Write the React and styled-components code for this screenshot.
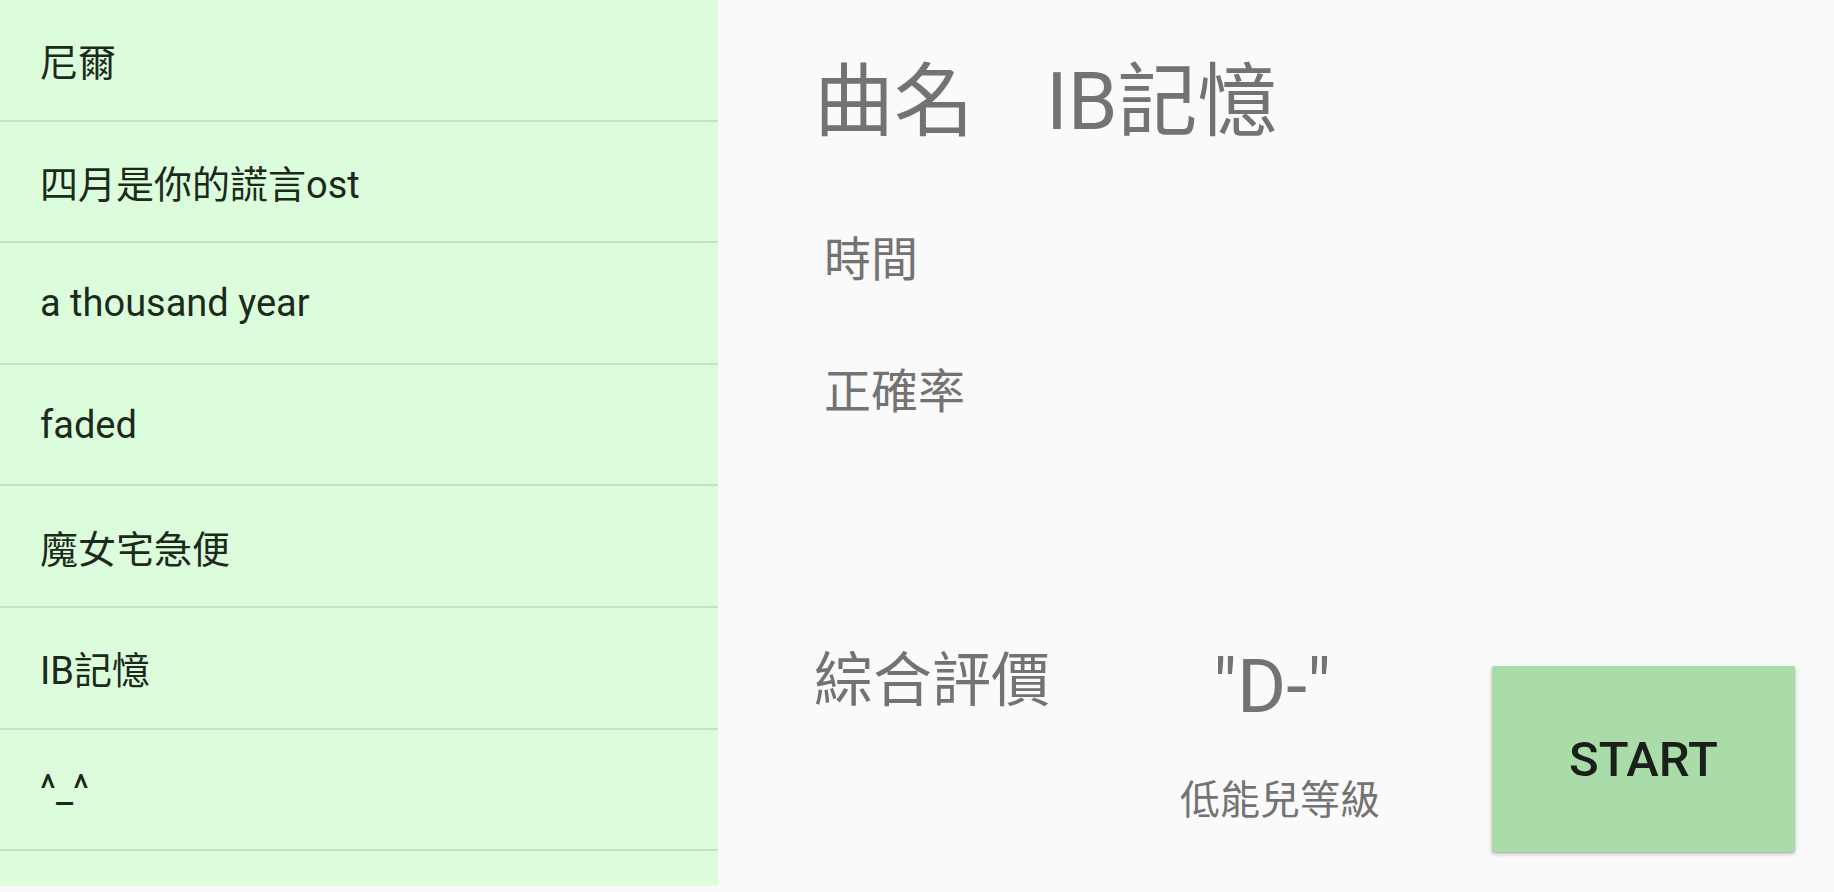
import React from 'react'
import styled, { createGlobalStyle } from 'styled-components'

const songs = [
  '尼爾',
  '四月是你的謊言ost',
  'a thousand year',
  'faded',
  '魔女宅急便',
  'IB記憶',
  '^_^',
  '',
]

const GlobalStyle = createGlobalStyle`
  html, body {
    margin: 0;
    padding: 0;
    background: #fafafa;
  }
  body {
    font-family: Roboto, "Noto Sans CJK TC", sans-serif;
  }
`

const Screen = styled.div`
  display: flex;
  width: 1834px;
  height: 892px;
  overflow: hidden;
  background: #fafafa;
`

const SongList = styled.ul`
  list-style: none;
  margin: 0;
  padding: 0;
  width: 718px;
  height: 886px;
  flex: none;
  overflow: hidden;
  background: #dcfddc;
`

const SongRow = styled.li`
  box-sizing: border-box;
  display: flex;
  align-items: center;
  height: 121.6px;
  padding-left: 40px;
  border-bottom: 2px solid #c5e2c5;
  font-size: 38px;
  color: #1c2a1c;
  white-space: pre;
`

const Detail = styled.section`
  flex: 1;
  display: flex;
  flex-direction: column;
  padding: 0 39px 40px 96px;
  color: #737373;
`

const Title = styled.h1`
  display: flex;
  margin: 62px 0 0;
  font-size: 80px;
  font-weight: 400;
  line-height: 1;
  span + span {
    margin-left: 72px;
  }
`

const Field = styled.div`
  margin: ${(p) => p.$top}px 0 0 10px;
  font-size: 47px;
  line-height: 1;
`

const Summary = styled.div`
  display: flex;
  align-items: flex-start;
  margin-top: auto;
`

const SummaryLabel = styled.div`
  margin-top: 5px;
  font-size: 59px;
  line-height: 1;
`

const Grade = styled.div`
  display: flex;
  flex-direction: column;
  align-items: center;
  width: 200px;
  margin-left: 130px;
`

const GradeMark = styled.div`
  margin: 3px 16px 0 0;
  font-size: 75px;
  line-height: 1;
`

const GradeNote = styled.div`
  margin-top: 57px;
  font-size: 40px;
  line-height: 1;
`

const StartButton = styled.button`
  width: 303px;
  height: 186px;
  margin: 20px 0 0 auto;
  border: none;
  border-radius: 2px;
  background: #a9dca8;
  box-shadow: 0 2px 4px rgba(0, 0, 0, 0.22), 0 1px 2px rgba(0, 0, 0, 0.12);
  font-family: Roboto, sans-serif;
  font-size: 49px;
  font-weight: 500;
  color: #1a1f1a;
  cursor: pointer;
`

const App = () => {
  return (
    <>
      <GlobalStyle />
      <Screen>
        <SongList>
          {songs.map((song, index) => (
            <SongRow key={index}>{song}</SongRow>
          ))}
        </SongList>
        <Detail>
          <Title>
            <span>曲名</span>
            <span>IB記憶</span>
          </Title>
          <Field $top={94}>時間</Field>
          <Field $top={85}>正確率</Field>
          <Summary>
            <SummaryLabel>綜合評價</SummaryLabel>
            <Grade>
              <GradeMark>"D-"</GradeMark>
              <GradeNote>低能兒等級</GradeNote>
            </Grade>
            <StartButton>START</StartButton>
          </Summary>
        </Detail>
      </Screen>
    </>
  )
}

export default App
